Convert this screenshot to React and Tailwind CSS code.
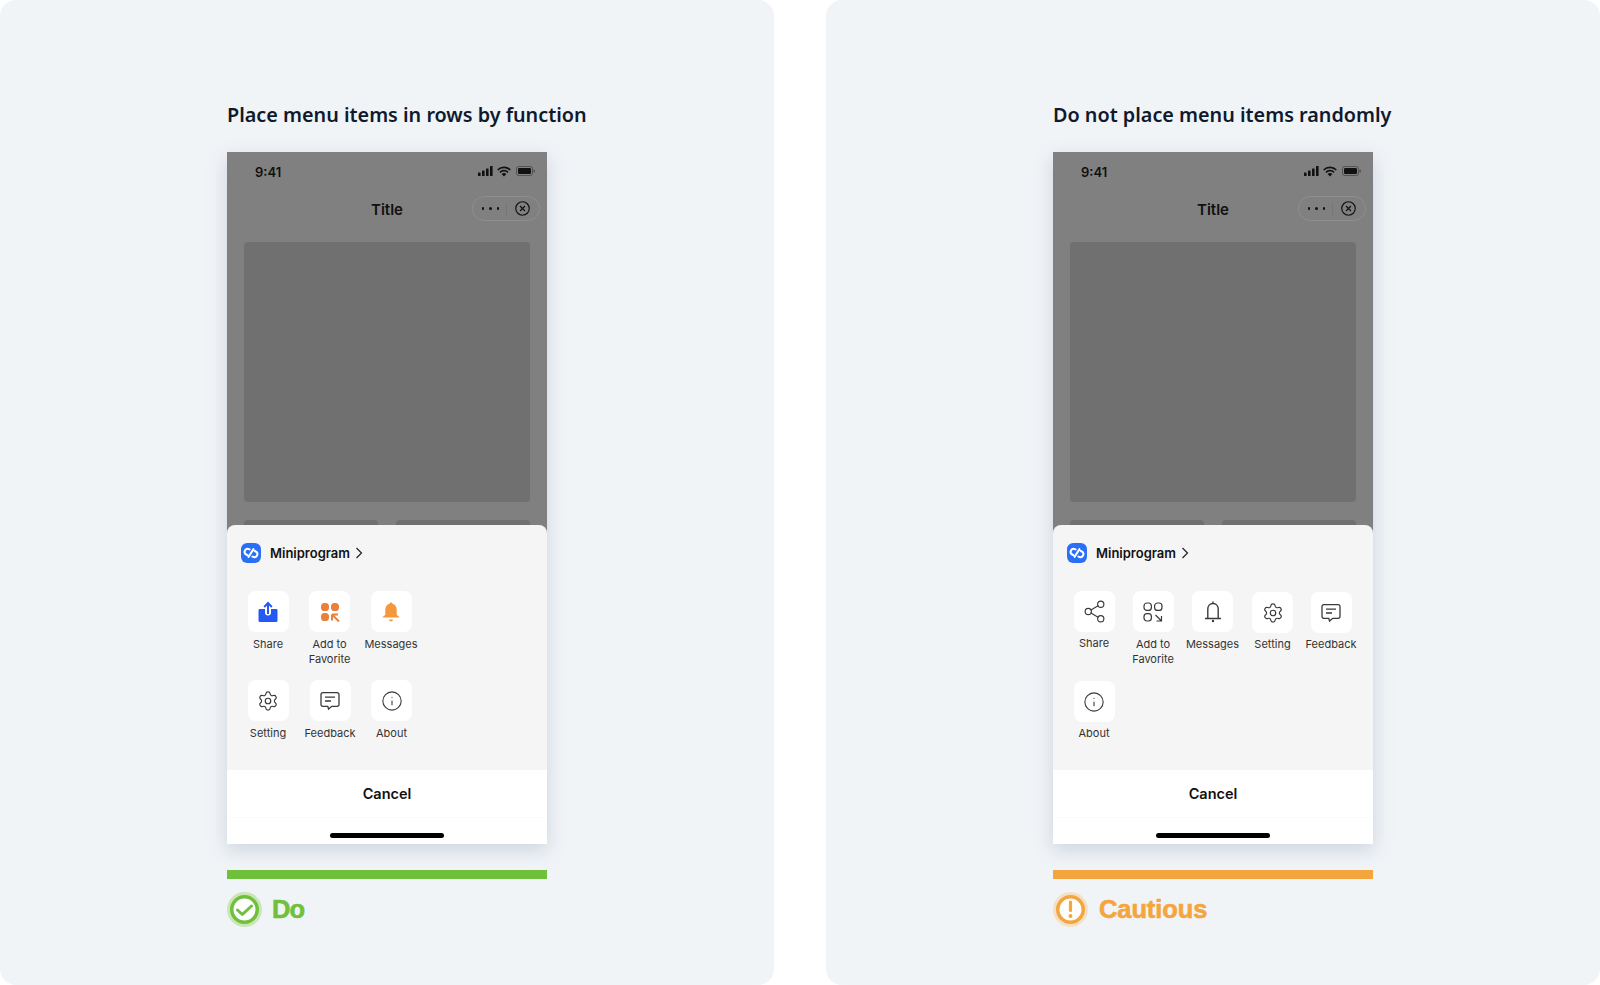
import React from "react";
import { Share2, Settings, Info } from "lucide-react";

const S = "#3a3a3a";
const Fav = ({ c }) => (
  <svg width="22" height="22" viewBox="0 0 22 22" fill="none">
    {c ? (
      <>
        <rect x="2" y="2" width="8" height="8" rx="3.6" fill="#e9803c" />
        <rect x="12" y="2" width="8" height="8" rx="3.6" fill="#e9803c" />
        <rect x="2" y="12" width="8" height="8" rx="3.6" fill="#e9803c" />
        <path d="M13 13.5h6M13 13.5v6M13.5 14l6.5 6.5" stroke="#e9803c" strokeWidth="2" />
      </>
    ) : (
      <>
        <rect x="2" y="2" width="7.4" height="7.4" rx="3" stroke={S} strokeWidth="1.2" />
        <rect x="12.6" y="2" width="7.4" height="7.4" rx="3" stroke={S} strokeWidth="1.2" />
        <rect x="2" y="12.6" width="7.4" height="7.4" rx="3" stroke={S} strokeWidth="1.2" />
        <path d="M13.500 14l5.500 5.500M19.500 15v5H14.500" stroke={S} strokeWidth="1.2" />
      </>
    )}
  </svg>
);
const ShareFill = () => (
  <svg width="20" height="22" viewBox="0 0 20 22" fill="none">
    <path d="M1.500 8H7v3.500a3 3 0 0 0 6 0V8h5.500a1.500 1.500 0 0 1 1 1v10.500a1.500 1.500 0 0 1-1.500 1.500H2A1.500 1.500 0 0 1 .5 19.500V9.500A1.500 1.500 0 0 1 1.500 8Z" fill="#2459f5" />
    <path d="M10 13V2.500M6.200 6 10 2l3.800 4" stroke="#2459f5" strokeWidth="2" />
  </svg>
);
const BellFill = () => (
  <svg width="18" height="22" viewBox="0 0 18 22" fill="none">
    <path d="M9 1.500c.8 0 1.300.5 1.400 1.200 2.900.7 4.300 3 4.300 6v4.300c0 1 .8 1.800 1.700 2.300.6.300 1.100.7 1.100 1.200H.5c0-.5.500-.9 1.100-1.200.9-.5 1.700-1.300 1.700-2.300V8.700c0-3 1.400-5.300 4.300-6 .1-.7.600-1.200 1.400-1.200Z" fill="#f4973d" />
    <path d="M7 18.500h4c0 1.200-.9 2-2 2s-2-.8-2-2Z" fill="#f4973d" />
  </svg>
);
const BellLine = () => (
  <svg width="20" height="24" viewBox="0 0 20 24" fill="none" stroke={S} strokeWidth="1.400">
    <path d="M10 1.500v2M10 3.500c-3.200 0-5.200 2.600-5.200 5.800v9M10 3.500c3.200 0 5.200 2.600 5.200 5.800v9M2 18.500h16" />
    <circle cx="10" cy="21" r="1.200" fill={S} stroke="none" />
  </svg>
);
const Chat = () => (
  <svg width="20" height="20" viewBox="0 0 20 20" fill="none" stroke={S} strokeWidth="1.300">
    <path d="M2.800 1.700h14.400a1.800 1.800 0 0 1 1.800 1.800v10a1.800 1.800 0 0 1-1.800 1.800h-5.400l-3.300 2.700-.7-2.700H2.800A1.800 1.800 0 0 1 1 13.500v-10a1.800 1.800 0 0 1 1.800-1.800Z" />
    <path d="M5 6.200h10M5 10h6" />
  </svg>
);
const share = <Share2 size={25} color={S} strokeWidth={1.1} />;
const gear = <Settings size={22} color={S} strokeWidth={1.3} />;
const info = <Info size={22} color={S} strokeWidth={1.2} />;

const Item = ({ w, icon, label, tile = "", text = "mt-[5px]" }) => (
  <div className={`flex flex-col items-center ${w}`}>
    <div className={`w-[41px] h-[41px] bg-white rounded-[8px] flex items-center justify-center ${tile}`}>{icon}</div>
    <div className={`${text} w-full text-center text-[11px] leading-[15px] text-[#333]`}>{label}</div>
  </div>
);

const Bars = () => (
  <svg width="58" height="12" viewBox="0 0 58 12" fill="#111">
    <rect x="0" y="7.500" width="2.600" height="3.500" rx=".6" />
    <rect x="4" y="5.500" width="2.600" height="5.500" rx=".6" />
    <rect x="8" y="3.500" width="2.600" height="7.500" rx=".6" />
    <rect x="12" y="1" width="2.600" height="10" rx=".6" />
    <path d="M26 3.200c2.300 0 4.300.9 5.800 2.400l1.100-1.200A9.700 9.700 0 0 0 26 1.500a9.700 9.700 0 0 0-6.900 2.900l1.100 1.200A8.200 8.200 0 0 1 26 3.200Zm0 3.300c1.400 0 2.600.5 3.500 1.400l1.100-1.200A6.500 6.500 0 0 0 26 4.800a6.500 6.500 0 0 0-4.600 1.900l1.100 1.200A5 5 0 0 1 26 6.500Zm0 5 2.400-2.400a3.400 3.400 0 0 0-4.800 0L26 11.500Z" />
    <rect x="38.500" y="1.500" width="16" height="9" rx="2.200" fill="none" stroke="#111" strokeOpacity=".4" />
    <rect x="40" y="3" width="13" height="6" rx="1.200" />
    <rect x="55.500" y="4.500" width="1.200" height="3" rx=".6" fill="#111" opacity=".5" />
  </svg>
);

const Logo = () => (
  <svg width="20" height="20" viewBox="0 0 21 21" fill="none">
    <rect width="21" height="21" rx="6.500" fill="#2b6ff5" />
    <path d="M9 6.700 7.800 6.300a2.700 2.700 0 0 0-3.400 1.200l-.3.600a2.700 2.700 0 0 0 1 3.700l1.500.9M12 14.300l1.200.4a2.700 2.700 0 0 0 3.400-1.200l.3-.6a2.700 2.700 0 0 0-1-3.700l-1.500-.9M8 14.500l5-8" stroke="#fff" strokeWidth="2.200" strokeLinecap="round" />
  </svg>
);

const Phone = ({ rows }) => (
  <div className="relative w-[320px] h-[692px] bg-[#808080] overflow-hidden shadow-[0_6px_18px_rgba(120,140,170,0.3)]">
    <div className="h-[40px] pl-[28px] pr-[11px] pt-[13px] flex justify-between items-start">
      <span className="text-[13px] leading-[15px] font-semibold text-[#111]">9:41</span>
      <Bars />
    </div>
    <div className="relative h-[34px] flex items-center justify-center">
      <span className="text-[15px] leading-[20px] font-semibold text-[#111] mt-[1px]">Title</span>
      <div className="absolute right-[7px] top-[4px] w-[68px] h-[25px] rounded-full border border-[#8e8e8e] flex items-center">
        <div className="w-[26px] flex justify-end gap-[5px]">
          <i className="w-[2.500px] h-[2.500px] rounded-full bg-[#111]" />
          <i className="w-[2.500px] h-[2.500px] rounded-full bg-[#111]" />
          <i className="w-[2.500px] h-[2.500px] rounded-full bg-[#111]" />
        </div>
        <div className="w-px h-[12px] bg-[#757575] ml-[7px]" />
        <svg className="ml-[8px]" width="15" height="15" viewBox="0 0 14 14" fill="none" stroke="#111" strokeWidth="1.100">
          <circle cx="7" cy="7" r="6.300" />
          <path d="M4.700 4.700l4.600 4.600M9.300 4.700l-4.600 4.600" />
        </svg>
      </div>
    </div>
    <div className="mt-[16px] mx-[17px] h-[260px] rounded-[4px] bg-[#707070]" />
    <div className="mt-[18px] mx-[17px] flex gap-[18px]">
      <div className="flex-1 h-[60px] rounded-[4px] bg-[#707070]" />
      <div className="flex-1 h-[60px] rounded-[4px] bg-[#707070]" />
    </div>
    <div className="absolute inset-x-0 bottom-0 h-[319px] flex flex-col rounded-t-[8px] overflow-hidden bg-[#f5f5f5]">
      <div className="h-[245px] flex flex-col">
        <div className="h-[66px] pl-[14px] pt-[18px] flex items-start">
          <Logo />
          <span className="ml-[9px] mt-[1px] text-[13px] leading-[18px] font-semibold text-[#111]">Miniprogram</span>
          <svg className="ml-[5px] mt-[4px]" width="9" height="12" viewBox="0 0 9 12" fill="none" stroke="#222" strokeWidth="1.200"><path d="M1.500 1l5 5-5 5" /></svg>
        </div>
        {rows}
      </div>
      <div className="h-[47px] bg-white flex items-center justify-center text-[14.500px] font-semibold text-[#111]">Cancel</div>
      <div className="flex-1 bg-white border-t border-[#fbfbfb] flex justify-center pt-[15px]">
        <div className="w-[114px] h-[5px] rounded-full bg-black" />
      </div>
    </div>
  </div>
);

const Verdict = ({ color, ring, label, bang, text }) => (
  <div className="mt-[26px]">
    <div className="h-[9px]" style={{ backgroundColor: color }} />
    <div className="mt-[13px] flex items-center h-[35px]">
      <svg width="35" height="35" viewBox="0 0 35 35" fill="none">
        <circle cx="17.500" cy="17.500" r="17.500" fill={ring} />
        <circle cx="17.500" cy="17.500" r="12.750" fill="#fff" stroke={color} strokeWidth="3.500" />
        {bang ? (
          <>
            <path d="M17.500 10v8.500" stroke={color} strokeWidth="3.200" strokeLinecap="round" />
            <circle cx="17.500" cy="24" r="2" fill={color} />
          </>
        ) : (
          <path d="M10.500 18l4.800 4.500L24.500 14" stroke={color} strokeWidth="3" strokeLinecap="round" strokeLinejoin="round" />
        )}
      </svg>
      <span className={`${text} text-[25.500px] leading-[35px] font-bold font-['Liberation_Sans',sans-serif] [-webkit-text-stroke:0.6px_currentColor]`} style={{ color }}>{label}</span>
    </div>
  </div>
);

const Panel = ({ title, rows, verdict }) => (
  <div className="w-[774px] h-[985px] rounded-[16px] bg-[#f1f4f7] pl-[227px] pt-[100px]">
    <div className="w-[320px]">
      <h2 className="whitespace-nowrap h-[52px] text-[19.800px] leading-[30px] font-semibold text-[#0f1a2e] font-['Noto_Sans',sans-serif]">{title}</h2>
      <Phone rows={rows} />
      {verdict}
    </div>
  </div>
);

export default function App() {
  return (
    <div className="w-[1600px] h-[985px] bg-white flex justify-between font-['Inter',sans-serif] overflow-hidden">
      <Panel
        title="Place menu items in rows by function"
        rows={
          <div className="pl-[10px]">
            <div className="h-[89px] flex">
              <Item w="w-[62px]" icon={<ShareFill />} label="Share" />
              <Item w="w-[61px]" icon={<Fav c />} label={<>Add to<br />Favorite</>} />
              <Item w="w-[62px]" icon={<BellFill />} label="Messages" />
            </div>
            <div className="flex">
              <Item w="w-[62px]" icon={gear} label="Setting" />
              <Item w="w-[62px]" icon={<Chat />} label="Feedback" />
              <Item w="w-[61px]" icon={info} label="About" />
            </div>
          </div>
        }
        verdict={<Verdict color="#6fc03a" ring="#c9e7b6" label="Do" text="ml-[10px] tracking-[-1px]" />}
      />
      <Panel
        title="Do not place menu items randomly"
        rows={
          <div className="pl-[11px]">
            <div className="h-[89px] flex">
              <Item w="w-[60px]" icon={share} label="Share" text="mt-[4px]" />
              <Item w="w-[58px]" icon={<Fav />} label={<>Add to<br />Favorite</>} />
              <Item w="w-[61px]" icon={<BellLine />} label="Messages" />
              <Item w="w-[59px]" icon={gear} label="Setting" tile="mt-[1px]" text="mt-[4px]" />
              <Item w="w-[58px]" icon={<Chat />} label="Feedback" tile="mt-[1px]" text="mt-[4px]" />
            </div>
            <div className="flex">
              <Item w="w-[60px]" icon={info} label="About" tile="mt-[1px]" text="mt-[4px]" />
            </div>
          </div>
        }
        verdict={<Verdict color="#f5a53e" ring="#f6e0c3" label="Cautious" bang text="ml-[11px] tracking-[-0.1px]" />}
      />
    </div>
  );
}
